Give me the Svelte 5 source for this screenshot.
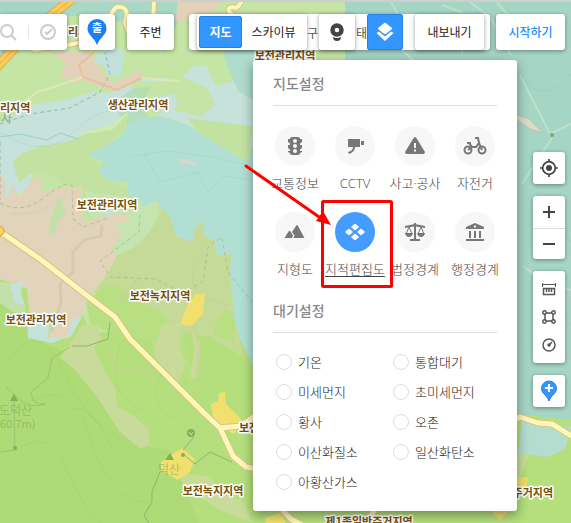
<script>
  let mapType = $state('지도');
  let layer = $state('지적편집도');
  let air = $state('');

  const mapTypes = ['지도', '스카이뷰'];

  const layers = [
    { name: '교통정보', icon: 'traffic' },
    { name: 'CCTV', icon: 'cctv' },
    { name: '사고·공사', icon: 'warning' },
    { name: '자전거', icon: 'bike' },
    { name: '지형도', icon: 'terrain' },
    { name: '지적편집도', icon: 'parcel' },
    { name: '법정경계', icon: 'scales' },
    { name: '행정경계', icon: 'bank' }
  ];

  const airOptions = [
    '기온',
    '통합대기',
    '미세먼지',
    '초미세먼지',
    '황사',
    '오존',
    '이산화질소',
    '일산화탄소',
    '아황산가스'
  ];

  const zoneLabels = [
    { x: 0, y: 110, text: '리지역', anchor: 'start' },
    { x: 68, y: 34, text: '리지역', anchor: 'start' },
    { x: 138, y: 107, text: '생산관리지역' },
    { x: 285, y: 58, text: '보전관리지역' },
    { x: 107, y: 207, text: '보전관리지역' },
    { x: 36, y: 322, text: '보전관리지역' },
    { x: 160, y: 298, text: '보전녹지지역' },
    { x: 239, y: 430, text: '보전녹지지역', anchor: 'start' },
    { x: 213, y: 493, text: '보전녹지지역' },
    { x: 369, y: 524, text: '제1종일반주거지역' },
    { x: 553, y: 495, text: '제1종일반주거지역', anchor: 'end' }
  ];
</script>

<main class="map-app">
  <svg class="map" viewBox="0 0 571 523" preserveAspectRatio="xMinYMin slice" aria-label="지도">
    <rect width="571" height="523" fill="#b5df7c" />
    <path fill="#c5e5a5" d="M0 0H400V330H90L60 260L0 275Z" />
    <path fill="#a5d5c5" d="M0 0H72L0 58ZM220 0H571V418L517 412H400L253 372V88L232 66L224 40L240 20Z" />
    <path fill="#c5e4a6" d="M190 0H345V60H230L205 35Z" />
    <path fill="#a9d8c7" d="M75 0H186L165 50L130 22L96 14H58Z" />
    <path fill="#e3d2b8" d="M178 0H222L210 12L175 20Z" />

    <!-- plains -->
    <path fill="#c6e2da" d="M0 121L25 104L65 98L92 90L110 91L128 77L151 75L180 78L194 64L206 63L215 84L253 73V145L215 138L180 120L150 111L120 124L92 135L70 139L50 144L38 163L30 180L36 188L22 196L14 187L5 208L0 210Z" />
    <path fill="#afdccc" d="M217 24L253 45V98L239 90L228 66Z" />
    <path fill="#c5e4a6" d="M126 78L160 80L177 73L208 86L215 103L200 115L170 107L148 116L140 96Z" />
    <path fill="#c6e2da" d="M160 94L174 92L178 102L171 112L158 108Z" />
    <path fill="#aadcae" d="M115 100L132 87L152 84L142 101L148 115L124 126Z" opacity="0.6" />
    <path fill="#d0ebaf" d="M72 136L92 128L112 122L128 110L126 125L105 134L78 139Z" />
    <path fill="#c3e2a2" d="M13 160L22 151L42 144L64 141L85 132L112 128L128 112L125 130L87 153L110 178L139 196L164 206L153 237L113 256L88 217L80 185L63 182L43 168L30 172L19 181Z" />
    <path fill="#c2e2a1" d="M187 116L210 119L253 124L247 158L214 141L198 130Z" />
    <path fill="#c5e5b0" d="M85 189L116 194L142 200L153 198L160 208L150 230L125 252L110 256L122 230L112 221L91 216Z" />
    <path fill="#e3d1b9" d="M52 50H90L103 72L114 82L140 67L143 77L117 89L103 86L83 78L66 85L75 77L60 76L66 62Z" />
    <path fill="#c1e1da" d="M96 53L113 44L125 51L120 75L108 74L104 63L95 61Z" />

    <!-- forest -->
    <path fill="#c6da98" d="M163 208L170 215L177 235L193 240L193 230L203 218L205 235L215 238L217 253L232 252L230 270L235 320L244 355L210 335L185 330L176 360L160 350L125 310L94 290L110 268L117 253L140 243L155 222Z" />
    <path fill="#b8df82" d="M86 300L108 282L118 284L139 300L160 310L178 328L186 346L197 390L180 370L164 340L120 335L90 322ZM215 322L226 306L236 320L234 340L214 333ZM130 316L142 307L162 312L174 324L158 338L134 333Z" />
    <path fill="#aedb75" d="M0 299L27 313L31 335L60 348L80 365L134 442L170 448L200 523H0Z" />
    <path fill="#b1dfd3" d="M87 153L100 147L123 133L128 122L143 115L163 115L187 123L213 140L247 160L255 140V372L250 358L240 337L235 320L230 270L232 252L217 253L215 238L205 235L203 218L193 230L193 240L177 235L170 215L163 208L157 198L143 205L140 197L127 193L128 180L107 178L98 168L105 160Z" />
    <path fill="#dfd6c8" d="M176 156L190 159L202 164L184 161Z" />
    <path fill="#e2d4ba" d="M0 173L4 175L7 198L13 182L18 196L33 177L43 175L40 190L67 185L83 185L79 203L85 220L100 215L123 210L130 218L115 223L122 230L112 247L117 253L103 277L87 297L85 310L72 320L70 336L48 337L52 320L30 317L27 287L0 277Z" />
    <path fill="#c1e0aa" d="M58 197L64 196L62 205L67 212L58 218L56 230L48 232L52 213ZM0 280L14 281L22 291L27 316L11 309L0 301Z" />
    <path fill="#c3e3da" d="M96 202L108 198L124 199L120 209L104 213ZM10 283L24 278L20 292L25 304L15 300ZM27 318L50 319L48 335H66L73 318L83 313L72 333L52 341L28 336Z" />
    <path fill="#c8db9b" d="M60 355L70 342L82 323H98L101 338L94 345L105 370L115 385L117 405L133 413L149 428L149 443L140 447L120 430L95 392L75 368Z" />
    <path fill="#c8db99" d="M162 322L181 322L179 343L186 361L175 388L160 365L153 350ZM191 325L201 342L198 375L190 377L194 346ZM180 472L208 474L228 494L244 500L253 521L220 508L183 484Z" />
    <path fill="#f2e06e" d="M196 292L205 291L203 312L191 324L180 322L188 302ZM211 402L218 399L219 391L225 390L226 402L243 419L234 432L220 425L213 415ZM161 460L182 446L195 457L190 470L178 478L161 468ZM265 516L280 511L287 523H266Z" />

    <!-- lower right -->
    <path fill="#b4df7c" d="M500 411L571 427V523H500Z" />
    <path fill="#b3ddcf" d="M522 419L571 425L565 447L548 455L518 451Z" />
    <path fill="#c5df9a" d="M518 451L529 453L521 475L510 488Z" />
    <path fill="#f0dd6a" d="M518 476L528 475L527 483L522 491L515 503L500 518L490 508Z" />

    <!-- contour lines and footpaths -->
    <g fill="none" stroke="#78a87e" stroke-opacity="0.14">
      <path d="M130 155L165 149L215 155L253 165M145 153L160 180L197 170L208 190L225 174L253 178M260 20Q350 50 400 10M410 52Q450 22 500 52M520 75Q545 105 571 72M517 230Q555 205 571 240M520 340Q553 291 571 323M0 130Q45 160 75 129T143 112M10 212Q45 215 68 187M120 345Q103 399 150 410" />
      <path d="M5 362Q39 314 63 368T125 440M0 420Q68 361 89 432T150 500M14 450Q50 423 66 465T103 523M68 410Q88 394 113 449M168 360Q139 406 180 418M197 260Q180 294 228 303" />
    </g>
    <g fill="none" stroke="#9cae80" stroke-dasharray="4 3">
      <path d="M0 201Q22 213 45 195T72 184L73 217L83 225L110 215M140 213L139 230L100 259L110 275L157 277L182 292L203 279L208 245L222 235L228 270L253 301" opacity="0.6" />
      <path d="M0 122L30 112L70 106L100 90L110 72L105 50M0 140V198" stroke="#91b8b0" />
    </g>
    <g fill="none" stroke="#8eb56c">
      <path d="M72 344L87 344L108 337L110 320M183 448L194 435M182 451L195 462L210 450L232 460M160 470L152 490L152 500L144 513L150 523" />
      <path d="M70 345L52 356L48 376L31 390Q32 404 45 402Q30 407 20 398L6 385M14 398L15 448L0 450" opacity="0.6" />
      <path d="M0 135L20 132L47 138L60 131L78 137" stroke="#9cced0" />
    </g>

    <!-- minor roads -->
    <g fill="none" stroke="#c7d394" stroke-width="3" opacity="0.7">
      <path d="M110 352L120 369L158 370M193 323L200 345L196 382M119 299L138 277" />
      <path d="M102 223L101 234L84 238L73 250L73 270L60 282L61 300L52 329" stroke="#d6c4aa" />
    </g>
    <g fill="none" stroke="#dce8bb" stroke-width="2">
      <path d="M20 104L37 90L66 81L83 75M141 76L180 79" />
      <path d="M94 50L79 63L83 75L117 88L141 76" stroke="#e8bfa0" />
      <path d="M391 0L400 15L386 33L415 60M442 3L461 10L462 52M470 0L490 15L511 53M497 1L510 15M520 73L550 132L571 122M552 136L522 182M524 265L545 279L571 288" stroke="#bfe0c6" />
    </g>
    <path fill="#d8dbc5" stroke="#b8c7ab" d="M514 112L529 117L543 131L530 127L515 117Z" />
    <circle cx="552" cy="133" r="2" fill="#75aa76" />

    <!-- main roads -->
    <g fill="none" stroke-linejoin="round" stroke-linecap="round">
      <path stroke="#dfad51" stroke-width="10" d="M73 -4L48 16L20 40L-4 66" />
      <path stroke="#fccb5a" stroke-width="8" d="M73 -4L48 16L20 40L-4 66" />
      <path stroke="#e5ae4c" d="M73 -4L48 16L20 40L-4 66" />
      <path stroke="#c7c796" stroke-width="6" d="M108 22Q113 3 120 5Q130 6 125 20L128 30M154 0L153 18M241 0Q237 8 233 5Q223 6 235 15M34 48L68 43L82 40" />
      <path stroke="#fff5b5" stroke-width="4" d="M108 22Q113 3 120 5Q130 6 125 20L128 30M154 0L153 18M241 0Q237 8 233 5Q223 6 235 15M34 48L68 43L82 40" />
      <path stroke="#d2c58c" stroke-width="7" d="M-3 230L5 233L40 257L85 292L115 315L130 337L150 357L180 387L205 412L220 426L228 443L233 454L246 465L258 467M220 426L240 424L255 414M283 509L291 517L302 523M501 425L520 415L538 421L552 422L575 436M377 504L369 517L358 526" />
      <path stroke="#fff7b6" stroke-width="5" d="M-3 230L5 233L40 257L85 292L115 315L130 337L150 357L180 387L205 412L220 426L228 443L233 454L246 465L258 467M220 426L240 424L255 414M283 509L291 517L302 523M501 425L520 415L538 421L552 422L575 436M377 504L369 517L358 526" />
    </g>
    <circle cx="-1" cy="229" r="5" fill="#ffcf5e" stroke="#d3a052" />

    <g class="peak">
      <path d="M14 392L18 399H10ZM170 451L174 458H165Z" />
      <circle cx="15" cy="446" r="2" />
      <circle cx="183" cy="453" r="2" />
      <circle cx="191" cy="431" r="4" />
      <path d="M189 430L191 433L193 430" fill="none" stroke="#c4e29a" />
      <text x="-1" y="413">도덕산</text>
      <text x="-6" y="426" class="peak__height">660.7m)</text>
      <text x="158" y="472">덕산</text>
    </g>
    <text class="temple" x="-10" y="121">은사</text>

    {#each zoneLabels as label}
      <text class="zone" x={label.x} y={label.y} text-anchor={label.anchor ?? 'middle'}>{label.text}</text>
    {/each}
  </svg>

  <header class="toolbar">
    <div class="card search">
      <button type="button" aria-label="검색">
        <svg width="18" height="18" viewBox="0 0 18 18" fill="none" stroke="#ccc" stroke-width="2">
          <circle cx="7" cy="8" r="6" />
          <path d="M11 12L16 17" />
        </svg>
      </button>
      <button type="button" aria-label="완료">
        <svg width="18" height="18" viewBox="0 0 18 18" fill="none" stroke="#ccc" stroke-width="2">
          <circle cx="9" cy="9" r="7" />
          <path d="M6 9L8 11L13 6" />
        </svg>
      </button>
    </div>

    <button class="card square" type="button" aria-label="출발">
      <svg width="20" height="26" viewBox="0 0 20 26">
        <path fill="#1a80f8" d="M10 0A9.5 9.5 0 0 0 .5 9.5C.5 15 5.5 18 8 22L10 26L12 22C14.500 18 19.500 15 19.500 9.500A9.500 9.500 0 0 0 10 0Z" />
        <text class="pin-text" x="10" y="13" text-anchor="middle">출</text>
      </svg>
    </button>

    <button class="card around" type="button">주변</button>

    <div class="card view-bar">
      <div class="card map-types">
        {#each mapTypes as type}
          <button type="button" class:active={mapType === type} onclick={() => (mapType = type)}>
            {type}
          </button>
        {/each}
      </div>
      <span class="tab-text">구</span>
      <button class="card square" type="button" aria-label="로드뷰">
        <svg width="16" height="20" viewBox="0 0 16 20">
          <circle cx="8" cy="8" r="4.500" fill="none" stroke="#444" stroke-width="4.500" />
          <path fill="#444" d="M4 15Q8 17 12 15Q12 19 8 19Q4 19 4 15Z" />
        </svg>
      </button>
      <span class="tab-text tab-text--end">형태</span>
      <button class="card square active" type="button" aria-label="지도설정" aria-expanded="true">
        <svg width="18" height="20" viewBox="0 0 18 20" fill="#fff">
          <path d="M9 1L16 6.500L9 12L2 6.500Z" stroke="#fff" stroke-linejoin="round" />
          <path d="M.5 11L3 9.500L9 14.500L15 9.500L17.500 11L9 19Z" />
        </svg>
      </button>
      <button class="card export" type="button">내보내기</button>
    </div>

    <button class="card start" type="button">시작하기</button>
  </header>

  <div class="content">
    <section class="panel">
      <h2>지도설정</h2>
      <div class="layers">
        {#each layers as item}
          <button
            class="layer"
            class:selected={layer === item.name}
            type="button"
            onclick={() => (layer = item.name)}
          >
            <span class="layer__icon">
              <svg width="24" height="24" viewBox="0 0 24 24" fill="currentColor" aria-hidden="true">
                {#if item.icon === 'traffic'}
                  <path fill-rule="evenodd" d="M9 3H15Q17 3 17 5H19V8L17 9.500V11H19V14L17 15.500V17H19V18L17 19Q17 21 15 21H9Q7 21 7 19L5 18V17H7V15.500L5 14V11H7V9.500L5 8V5H7Q7 3 9 3ZM12 5A2 2 0 1 0 12 9A2 2 0 1 0 12 5ZM12 10A2 2 0 1 0 12 14A2 2 0 1 0 12 10ZM12 15A2 2 0 1 0 12 19A2 2 0 1 0 12 15Z" />
                {:else if item.icon === 'cctv'}
                  <path d="M5 5H17V13H12Q12 18 6 20L5 18Q10 17 10 13H5ZM18 7H19.500V11H18ZM19.500 7H21V11H19.500Z" />
                {:else if item.icon === 'warning'}
                  <path fill-rule="evenodd" d="M12 3Q13 3 14 5L22 18Q22 20 20 20H4Q2 20 2 18L10 5Q11 3 12 3ZM11 9V14H13V9ZM11 15.500V17.500H13V15.500Z" />
                {:else if item.icon === 'bike'}
                  <g fill="none" stroke="currentColor" stroke-width="2">
                    <circle cx="5" cy="16" r="3.500" />
                    <circle cx="19" cy="16" r="3.500" />
                    <path d="M4 9H8M6 9L9 13L5 16M9 13H13L16 9L19 16M12 4H15L16 9" />
                  </g>
                {:else if item.icon === 'terrain'}
                  <path d="M1.500 18L5.500 11.500Q6.500 10 7.500 11.500L10 15.500L9 18ZM10.500 18L11.500 15.500L9 12L13 6Q14 4 15 6L21.500 18Z" />
                {:else if item.icon === 'parcel'}
                  <path stroke="currentColor" stroke-linejoin="round" d="M12 4L15.500 7L12 10L8.500 7ZM12 14L15.500 17L12 20L8.500 17ZM6 9L9.500 12L6 15L2.500 12ZM18 9L21.500 12L18 15L14.500 12Z" />
                {:else if item.icon === 'scales'}
                  <path d="M11 3H13V5H11ZM2 6L12 4L22 6V8L13 6.500V19H17V21H7V19H11V6.500L2 8ZM2 13H10Q9 17 6 17T2 13ZM14 13H22Q21 17 18 17T14 13Z" />
                  <path fill="none" stroke="currentColor" d="M6 7L3 14H9ZM18 7L15 14H21Z" />
                {:else}
                  <path fill-rule="evenodd" d="M12 3L21 7V9H3V7ZM11 5.500V7.500H13V5.500ZM6 11H8V18H6ZM11 11H13V18H11ZM16 11H18V18H16ZM3 19H21V21H3Z" />
                {/if}
              </svg>
            </span>
            <span class="layer__name">{item.name}</span>
          </button>
        {/each}
      </div>

      <h2>대기설정</h2>
      <div class="air">
        {#each airOptions as option}
          <label>
            <input type="radio" name="air" value={option} bind:group={air} />
            {option}
          </label>
        {/each}
      </div>

      <svg class="guide" width="152" height="132" viewBox="0 0 152 132" aria-hidden="true">
        <rect x="80.500" y="41.500" width="69" height="85" rx="1" fill="none" stroke="#f00" stroke-width="3" />
        <path d="M4 6L80 59" stroke="#f00" stroke-width="3" stroke-linecap="round" />
        <path fill="#f00" d="M89 65L74 61L81 51Z" />
      </svg>
    </section>

    <aside class="tools">
      <div class="card tool-group">
        <button type="button" aria-label="현재 위치">
          <svg width="18" height="18" viewBox="0 0 18 18" fill="none" stroke="#444" stroke-width="1.700">
            <circle cx="9" cy="9" r="6.300" />
            <circle cx="9" cy="9" r="3" fill="#444" stroke="none" />
            <path d="M9 0V3M9 15V18M0 9H3M15 9H18" />
          </svg>
        </button>
      </div>
      <div class="card tool-group zoom">
        <button type="button" aria-label="확대">
          <svg width="12" height="12" viewBox="0 0 12 12"><path stroke="#444" stroke-width="2" d="M0 6H12M6 0V12" /></svg>
        </button>
        <button type="button" aria-label="축소">
          <svg width="12" height="12" viewBox="0 0 12 12"><path stroke="#444" stroke-width="2" d="M0 6H12" /></svg>
        </button>
      </div>
      <div class="card tool-group measure">
        <button type="button" aria-label="거리 재기">
          <svg width="14" height="14" viewBox="0 0 14 14" fill="none" stroke="#555">
            <path d="M.500 1V5M13.500 1V5M1 2.500H13" />
            <path stroke-width="1.500" d="M1.500 6.500H12.500V12.500H1.500ZM4.500 7V10M7 7V10M9.500 7V10" />
          </svg>
        </button>
        <button type="button" aria-label="면적 재기">
          <svg width="14" height="14" viewBox="0 0 14 14" fill="none" stroke="#555" stroke-width="1.500">
            <circle cx="2.500" cy="2.500" r="1.700" />
            <circle cx="11.500" cy="2.500" r="1.700" />
            <circle cx="2.500" cy="11.500" r="1.700" />
            <circle cx="11.500" cy="11.500" r="1.700" />
            <path d="M4 3H10M4 11H10M3 4V10M11 4V10" />
          </svg>
        </button>
        <button type="button" aria-label="반경 재기">
          <svg width="14" height="14" viewBox="0 0 14 14" fill="none" stroke="#555" stroke-width="1.500">
            <circle cx="7" cy="7" r="6" />
            <path d="M7 7L10 4" />
            <circle cx="7" cy="7" r="1" fill="#555" />
          </svg>
        </button>
      </div>
      <div class="card tool-group">
        <button type="button" aria-label="장소 추가">
          <svg width="16" height="22" viewBox="0 0 16 22">
            <path fill="#3396ff" stroke="#2580df" d="M8 1A7.500 7.500 0 0 0 .500 8.500C.500 13 5 15 6.500 18L8 21L9.500 18C11 15 15.500 13 15.500 8.500A7.500 7.500 0 0 0 8 1Z" />
            <path stroke="#fff" stroke-width="2" d="M4 8H12M8 4V12" />
          </svg>
        </button>
      </div>
    </aside>
  </div>
</main>

<style>
  :global(body) {
    margin: 0;
  }

  .map-app {
    position: relative;
    box-sizing: border-box;
    min-height: 100vh;
    overflow: hidden;
    border-top: 2px solid #ccd0cd;
    font-family: 'Noto Sans CJK KR', 'Noto Sans', sans-serif;
    color: #222;
  }

  .map {
    position: absolute;
    inset: 0;
    width: 100%;
    height: 100%;
  }

  .zone {
    font-size: 11px;
    font-weight: 700;
    fill: #75500c;
    stroke: #fff;
    stroke-width: 3px;
    stroke-linejoin: round;
    paint-order: stroke;
  }

  .peak {
    fill: #86ad59;
    font-size: 12px;
  }

  .peak text {
    opacity: 0.6;
  }

  .peak .peak__height {
    font-size: 11px;
  }

  .temple {
    fill: #87a59c;
    font-size: 12px;
  }

  button {
    display: flex;
    align-items: center;
    justify-content: center;
    padding: 0;
    border: 0;
    background: none;
    color: inherit;
    font-family: inherit;
    font-size: 12px;
    line-height: 20px;
    white-space: nowrap;
    cursor: pointer;
  }

  .card {
    border-radius: 3px;
    background: #fff;
    box-shadow: 0 1px 4px rgba(0, 0, 0, 0.4);
  }

  .toolbar {
    position: relative;
    display: flex;
    gap: 12px;
    height: 36px;
    padding: 12px 6px 0 0;
  }

  .search {
    display: flex;
    align-items: center;
    width: 67px;
    border-radius: 0 3px 3px 0;
  }

  .search button {
    width: 28px;
    padding-right: 10px;
  }

  .search button + button {
    width: 38px;
    height: 14px;
    padding-right: 0;
    border-left: 1px solid #e5e5e5;
  }

  .square {
    width: 36px;
  }

  .pin-text {
    fill: #fff;
    font-size: 11px;
    font-weight: 700;
  }

  .around {
    width: 47px;
  }

  .view-bar {
    display: flex;
    margin-left: auto;
    padding: 0 6px 0 8px;
  }

  .map-types {
    box-sizing: border-box;
    display: flex;
    width: 110px;
    padding: 2px;
  }

  .map-types button {
    flex: 1 1 auto;
    border-radius: 3px;
  }

  .active {
    background: #3396ff;
    box-shadow: inset 0 0 0 1px #2583e8;
    color: #fff;
  }

  .map-types .active {
    flex: 0 0 43px;
    font-weight: 700;
  }

  .tab-text {
    display: flex;
    align-items: center;
    width: 12px;
    overflow: hidden;
    font-size: 12px;
    color: #555;
    white-space: nowrap;
  }

  .tab-text--end {
    justify-content: flex-end;
  }

  .export {
    width: 69px;
    margin-left: 12px;
  }

  .start {
    width: 69px;
    margin-left: -6px;
    color: #258fff;
    font-weight: 500;
  }

  .content {
    position: relative;
    display: flex;
    align-items: flex-start;
    justify-content: flex-end;
    gap: 16px;
    padding: 10px 6px 11px 0;
  }

  .panel {
    position: relative;
    box-sizing: border-box;
    width: 264px;
    padding: 0 12px 14px;
    border-radius: 3px;
    background: #fff;
    box-shadow: 0 4px 12px rgba(0, 0, 0, 0.4);
  }

  h2 {
    margin: 0 8px;
    padding: 12px 0 10px;
    border-bottom: 1px solid #ddd;
    font-size: 14px;
    font-weight: 500;
    line-height: 23px;
    color: #888;
  }

  .layers {
    display: grid;
    grid-template-columns: repeat(4, 1fr);
    row-gap: 18px;
    padding: 20px 0 7px;
  }

  .layer {
    flex-direction: column;
    gap: 6px;
    min-width: 0;
    font-family: 'Open Sans', 'Noto Sans CJK KR', sans-serif;
    font-size: 13px;
    font-weight: 300;
    line-height: 22px;
    color: #444;
  }

  .layer__icon {
    display: flex;
    align-items: center;
    justify-content: center;
    width: 40px;
    height: 40px;
    border-radius: 50%;
    background: #f7f7f7;
    color: #777;
  }

  .selected .layer__icon {
    background: #449cff;
    color: #fff;
  }

  .selected .layer__name {
    text-decoration: underline;
    text-underline-offset: 2px;
  }

  .air {
    display: grid;
    grid-template-columns: repeat(2, 117px);
    padding: 14px 0 0 11px;
  }

  .air label {
    display: flex;
    align-items: center;
    gap: 6px;
    font-size: 13px;
    font-weight: 300;
    line-height: 30px;
    color: #222;
    white-space: nowrap;
  }

  .air input {
    appearance: none;
    box-sizing: border-box;
    width: 16px;
    height: 16px;
    margin: 0;
    border: 1px solid #ddd;
    border-radius: 50%;
    background: #fff;
  }

  .air input:checked {
    border: 5px solid #3396ff;
  }

  .guide {
    position: absolute;
    top: 100px;
    left: -11px;
    pointer-events: none;
  }

  .tools {
    display: flex;
    flex-direction: column;
    gap: 12px;
    width: 32px;
    padding-top: 92px;
  }

  .tool-group button {
    width: 32px;
    height: 32px;
  }

  .zoom button + button {
    height: 31px;
    border-top: 1px solid #ddd;
  }

  .measure {
    padding: 4px 0;
  }

  .measure button {
    height: 28px;
  }
</style>
